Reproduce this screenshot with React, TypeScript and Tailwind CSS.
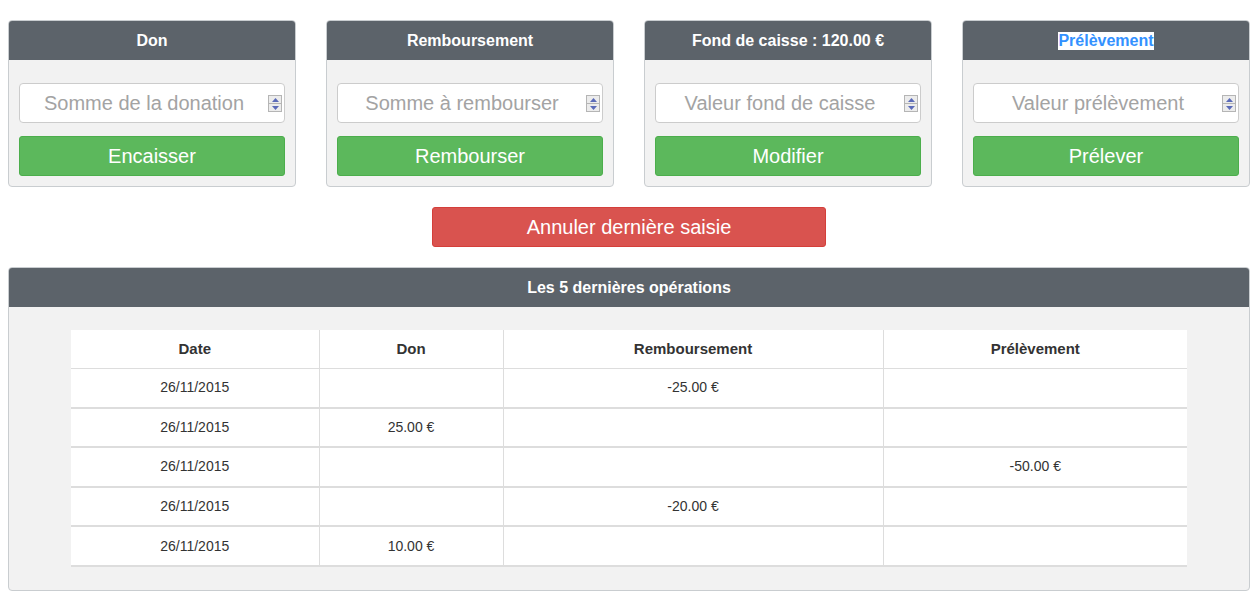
import React from "react";

const font = { fontFamily: '"Liberation Sans", Arial, sans-serif' };

function Spinner() {
  return (
    <div className="absolute right-[2px] top-[11px] flex flex-col w-[14px] h-[17px] border border-[#b5b5b5] bg-[#ececec]">
      <div className="flex-1 flex items-center justify-center border-b border-[#b5b5b5]">
        <svg width="7" height="4" viewBox="0 0 7 4"><path d="M0 4 L3.5 0 L7 4 Z" fill="#5a6ab8" /></svg>
      </div>
      <div className="flex-1 flex items-center justify-center">
        <svg width="7" height="4" viewBox="0 0 7 4"><path d="M0 0 L3.5 4 L7 0 Z" fill="#5a6ab8" /></svg>
      </div>
    </div>
  );
}

function Card({ title, placeholder, action, highlight }: { title: string; placeholder: string; action: string; highlight?: boolean }) {
  return (
    <div className="w-[288px] border border-[#c9cdd0] rounded-[4px] bg-[#f2f2f2] overflow-hidden">
      <div className="h-[39px] bg-[#5c636a] flex items-center justify-center text-[16px] font-bold text-white">
        {highlight ? <span className="bg-white text-[#3391ff] leading-[18px]">{title}</span> : title}
      </div>
      <div className="px-[10px] pt-[23px] pb-[10px] flex flex-col gap-[13px]">
        <div className="relative h-[40px] bg-white border border-[#cccccc] rounded-[4px] flex items-center justify-center pr-[16px]">
          <span className="text-[20px] text-[#a3a3a3]">{placeholder}</span>
          <Spinner />
        </div>
        <button className="h-[40px] bg-[#5cb85c] border border-[#4cae4c] rounded-[3px] text-white text-[20px]">{action}</button>
      </div>
    </div>
  );
}

const rows: [string, string, string, string][] = [
  ["26/11/2015", "", "-25.00 €", ""],
  ["26/11/2015", "25.00 €", "", ""],
  ["26/11/2015", "", "", "-50.00 €"],
  ["26/11/2015", "", "-20.00 €", ""],
  ["26/11/2015", "10.00 €", "", ""],
];

export default function App() {
  return (
    <div style={font} className="bg-white min-h-[600px] pt-[20px]">
      <div className="ml-[8px] w-[1242px] flex flex-col">
        <div className="flex gap-[30px] items-start">
          <Card title="Don" placeholder="Somme de la donation" action="Encaisser" />
          <Card title="Remboursement" placeholder="Somme à rembourser" action="Rembourser" />
          <Card title="Fond de caisse : 120.00 €" placeholder="Valeur fond de caisse" action="Modifier" />
          <Card title="Prélèvement" placeholder="Valeur prélèvement" action="Prélever" highlight />
        </div>
        <div className="flex justify-center mt-[20px]">
          <button className="w-[394px] h-[40px] bg-[#d9534f] border border-[#d43f3a] rounded-[3px] text-white text-[20px]">Annuler dernière saisie</button>
        </div>
        <div className="mt-[20px] border border-[#c9cdd0] rounded-[4px] bg-[#f2f2f2] overflow-hidden">
          <div className="h-[39px] bg-[#5c636a] flex items-center justify-center text-[16px] font-bold text-white">Les 5 dernières opérations</div>
          <div className="pt-[23px] pb-[23px] flex justify-center">
            <table className="w-[1116px] bg-white text-[14px] text-[#333] border-collapse table-fixed">
              <colgroup>
                <col className="w-[248px]" />
                <col className="w-[184px]" />
                <col className="w-[380px]" />
                <col className="w-[304px]" />
              </colgroup>
              <thead>
                <tr className="h-[38px] border-b border-[#dddddd] text-[15px]">
                  {["Date", "Don", "Remboursement", "Prélèvement"].map((h, i) => (
                    <th key={h} className={`font-bold text-center ${i > 0 ? "border-l border-[#dddddd]" : ""}`}>{h}</th>
                  ))}
                </tr>
              </thead>
              <tbody>
                {rows.map((r, ri) => (
                  <tr key={ri} className={`h-[39.6px] ${ri > 0 ? "border-t-2 border-[#dddddd]" : ""} ${ri === rows.length - 1 ? "border-b-2 border-[#dddddd]" : ""}`}>
                    {r.map((c, ci) => (
                      <td key={ci} className={`text-center ${ci > 0 ? "border-l border-[#dddddd]" : ""}`}>{c}</td>
                    ))}
                  </tr>
                ))}
              </tbody>
            </table>
          </div>
        </div>
      </div>
    </div>
  );
}
